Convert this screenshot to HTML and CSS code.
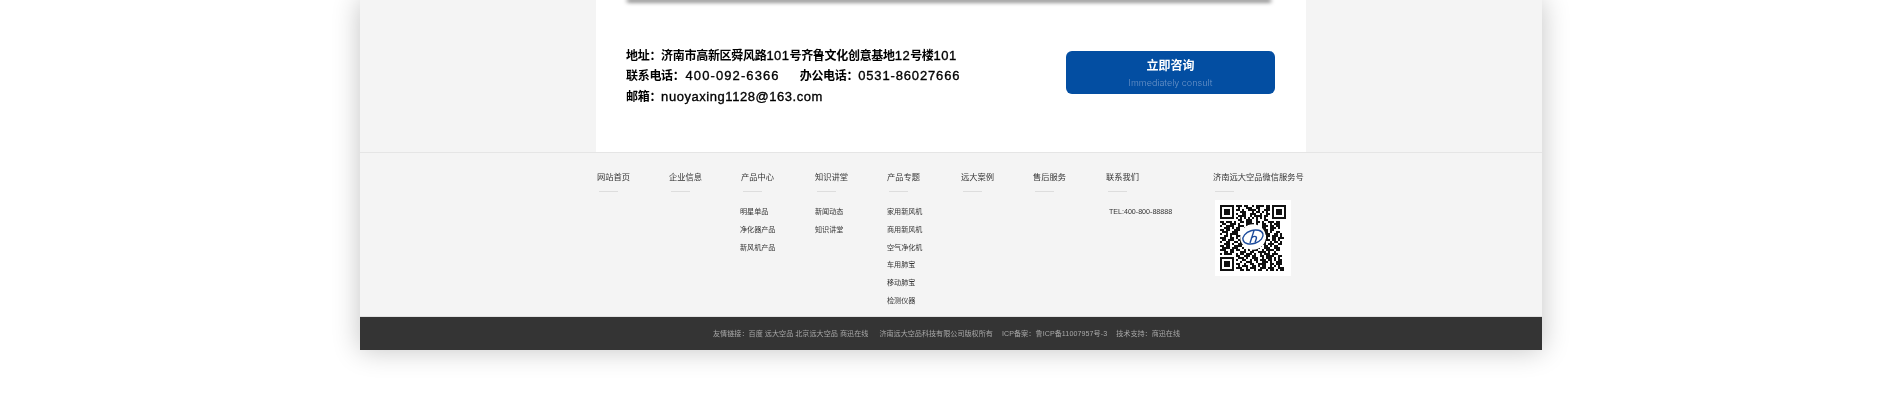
FILE: index.html
```html
<!DOCTYPE html>
<html lang="zh-CN">
<head>
<meta charset="utf-8">
<title>济南远大空品</title>
<link rel="stylesheet" href="styles.css">
</head>
<body>
<div class="frame">
  <div class="top">
    <section class="panel">
      <div class="shot-edge"></div>
      <div class="contact-row">
        <div class="contact">
          <p>地址&#xFF1A;济南市高新区舜风路<span class="la">101</span>号齐鲁文化创意基地<span class="la">12</span>号楼<span class="la">101</span></p>
          <p>联系电话&#xFF1A;<span class="la tel">400-092-6366</span><span class="office">办公电话&#xFF1A;</span><span class="la tel tel-office">0531-86027666</span></p>
          <p>邮箱&#xFF1A;<span class="la mail">nuoyaxing1128@163.com</span></p>
        </div>
        <a class="consult" href="#"><strong>立即咨询</strong><span>Immediately consult</span></a>
      </div>
    </section>
  </div>
  <nav class="sitemap">
    <div class="col"><h4>网站首页</h4></div>
    <div class="col"><h4>企业信息</h4></div>
    <div class="col"><h4>产品中心</h4><ul class="pull"><li>明星单品</li><li>净化器产品</li><li>新风机产品</li></ul></div>
    <div class="col"><h4>知识讲堂</h4><ul><li>新闻动态</li><li>知识讲堂</li></ul></div>
    <div class="col"><h4>产品专题</h4><ul><li>家用新风机</li><li>商用新风机</li><li>空气净化机</li><li>车用肺宝</li><li>移动肺宝</li><li>检测仪器</li></ul></div>
    <div class="col"><h4>远大案例</h4></div>
    <div class="col"><h4>售后服务</h4></div>
    <div class="col"><h4>联系我们</h4><ul class="push"><li>TEL:400-800-88888</li></ul></div>
    <div class="col"><h4>济南远大空品微信服务号</h4>
      <div class="qr">
        <svg viewBox="0 0 33 33" width="66" height="66" aria-label="二维码">
          <path fill="#111" fill-rule="evenodd" d="M0 0h7v7h-7zM1 1v5h5v-5zM2 2h3v3h-3zM26 0h7v7h-7zM27 1v5h5v-5zM28 2h3v3h-3zM0 26h7v7h-7zM1 27v5h5v-5zM2 28h3v3h-3z"/>
          <path fill="none" stroke="#111" stroke-width="1" d="M8 .5h3m1 0h2m2 0h1m1 0h4m1 0h2M9 1.5h1m3 0h3m2 0h2m3 0h2M8 2.5h2m1 0h1m2 0h4m1 0h1m2 0h3M10 3.5h3m3 0h1m1 0h2m1 0h1m1 0h1M8 4.5h1m2 0h2m2 0h3m2 0h1m2 0h2M9 5.5h4m2 0h1m1 0h4m1 0h2M8 6.5h1m1 0h1m1 0h1m1 0h1m1 0h1m1 0h1m1 0h1m1 0h1M9 7.5h2m2 0h3m2 0h1m3 0h2M0 8.5h2m1 0h3m1 0h1m2 0h2m1 0h3m2 0h2m1 0h1m2 0h3m1 0h2M1 9.5h2m2 0h3m1 0h1m3 0h4m1 0h1m2 0h2m2 0h1m1 0h3M0 10.5h1m2 0h4m2 0h3m1 0h1m2 0h3m2 0h3m1 0h2m1 0h2M2 11.5h3m1 0h1m1 0h2m2 0h4m3 0h1m1 0h2m2 0h3m1 0h1M0 12.5h2m1 0h2m2 0h3m2 0h1m1 0h2m1 0h2m2 0h3m1 0h2M1 13.5h3m2 0h3m2 0h1m10 0h2m1 0h1m2 0h2M0 14.5h1m2 0h1m1 0h4m2 0h1m10 0h3m2 0h2m1 0h1M2 15.5h2m1 0h1m2 0h3m12 0h2m1 0h3m1 0h1M0 16.5h3m2 0h2m1 0h1m1 0h1m12 0h1m2 0h2m1 0h3M1 17.5h2m1 0h3m2 0h2m11 0h3m1 0h2m1 0h1M0 18.5h1m2 0h2m2 0h2m1 0h2m10 0h1m2 0h1m1 0h2m1 0h1M2 19.5h3m1 0h1m2 0h3m9 0h2m1 0h3m2 0h2M0 20.5h2m1 0h2m2 0h4m2 0h2m1 0h2m2 0h1m1 0h2m1 0h1m1 0h2M1 21.5h4m1 0h3m2 0h1m2 0h3m1 0h2m2 0h3m2 0h3M0 22.5h3m2 0h2m1 0h2m2 0h1m1 0h1m1 0h3m2 0h1m1 0h4m1 0h2M2 23.5h2m1 0h2m3 0h3m2 0h2m2 0h4m1 0h1m2 0h1M0 24.5h1m1 0h4m2 0h1m1 0h2m1 0h3m1 0h1m2 0h1m1 0h3m1 0h3M8 25.5h2m2 0h3m1 0h2m2 0h2m1 0h4m2 0h2M9 26.5h3m1 0h1m2 0h3m2 0h1m1 0h3m1 0h1m1 0h1M8 27.5h1m2 0h2m2 0h1m1 0h2m1 0h3m1 0h2m1 0h1m1 0h2M10 28.5h1m2 0h3m2 0h1m2 0h3m1 0h1m2 0h3M8 29.5h2m2 0h1m2 0h2m2 0h4m2 0h2m1 0h3M9 30.5h1m1 0h3m2 0h2m1 0h1m1 0h2m2 0h1m1 0h1m1 0h1M8 31.5h3m2 0h1m1 0h3m2 0h3m1 0h3m2 0h3M10 32.5h2m1 0h2m2 0h1m1 0h2m2 0h1m1 0h2m1 0h1m1 0h2"/>
          <circle cx="16.5" cy="16" r="6.4" fill="#fff"/>
          <g fill="none" stroke="#1c4b9c">
            <ellipse cx="16.5" cy="16" rx="5.2" ry="3.3" transform="rotate(-18 16.5 16)" stroke-width=".7"/>
            <path d="M17 12.8 15 19M15.6 16.6c1-1.3 3-1.2 2.6.2l-.7 2" stroke-width=".7"/>
          </g>
        </svg>
      </div>
    </div>
  </nav>
  <footer class="legal">
    <span class="links">友情链接&#xFF1A;百度 远大空品 北京远大空品 商迅在线</span>
    <span class="owner">济南远大空品科技有限公司版权所有</span>
    <span class="icp">ICP备案&#xFF1A;鲁ICP备11007957号-3</span>
    <span class="support">技术支持&#xFF1A;商迅在线</span>
  </footer>
</div>
</body>
</html>
```
FILE: styles.css
```css
* { box-sizing: border-box; }
html, body { margin: 0; padding: 0; }
body {
  background: #fff;
  height: 400px;
  overflow: hidden;
  font-family: "Liberation Sans", "Noto Sans CJK SC", sans-serif;
}
.frame {
  width: 1182px;
  margin-left: 360px;
  background: #f4f4f4;
  box-shadow: 0 0 26px rgba(0, 0, 0, .24);
}
.top {
  height: 154px;
  padding-left: 236px;
  border-bottom: 1px solid #e5e5e5;
}
.panel {
  width: 710px;
  height: 153px;
  background: #fff;
}
.shot-edge {
  height: 1px;
  margin: -1px 36px 0 32px;
  box-shadow: 0 1px 4px 1px rgba(0, 0, 0, .65);
}
.contact-row {
  display: flex;
  justify-content: space-between;
  align-items: flex-start;
  padding: 46px 31px 0 30px;
}
.contact { filter: blur(.25px); }
.contact p {
  margin: 0;
  font-size: 12px;
  line-height: 20.4px;
  font-weight: 700;
  letter-spacing: -.3px;
  color: #000;
  white-space: nowrap;
}
.la {
  font-size: 13px;
  font-weight: 400;
  letter-spacing: .45px;
  -webkit-text-stroke: .35px #000;
}
.tel { letter-spacing: 1.1px; margin-left: 1px; }
.tel-office { letter-spacing: .85px; margin-left: 0; }
.mail { letter-spacing: .55px; }
.office { margin-left: 20px; }
.consult {
  display: flex;
  flex-direction: column;
  align-items: center;
  width: 209px;
  height: 43px;
  margin-top: 5px;
  padding-top: 8px;
  border-radius: 6px;
  background: #034ea2;
  text-decoration: none;
}
.consult strong {
  font-size: 12px;
  line-height: 15px;
  color: #fff;
  filter: blur(.2px);
}
.consult span {
  margin-top: 3px;
  font-size: 9px;
  line-height: 12px;
  font-family: "Inter", "Liberation Sans", sans-serif;
  font-weight: 300;
  color: #6d95c8;
  filter: blur(.2px);
}
.sitemap {
  display: grid;
  grid-template-columns: 72px 72px 74px 72px 74px 72px 73px 107px auto;
  height: 163px;
  padding: 19px 0 0 237px;
  filter: blur(.25px);
}
.col h4 {
  margin: 0;
  font-size: 8.25px;
  line-height: 12px;
  font-weight: 400;
  color: #333;
  white-space: nowrap;
}
.col h4::after {
  content: "";
  display: block;
  width: 19px;
  height: 1px;
  margin: 7px 0 0 1.5px;
  background: #ddd;
}
.col ul {
  margin: 12px 0 0;
  padding: 0;
  list-style: none;
}
.col ul.pull { margin-left: -1px; }
.col ul.push { margin-left: 3px; }
.col li {
  font-size: 7.1px;
  line-height: 17.8px;
  color: #333;
  white-space: nowrap;
}
.qr {
  width: 76px;
  height: 76px;
  margin: 8px 0 0 2px;
  padding: 5px;
  background: #fff;
}
.qr svg { display: block; }
.legal {
  display: flex;
  align-items: center;
  height: 34px;
  padding: 0 0 2px 353px;
  border-top: 1px solid #e2e2e2;
  background: #343434;
  background-clip: padding-box;
  font-size: 7.1px;
  color: #a8a8a8;
  white-space: nowrap;
}
.legal span { filter: blur(.2px); }
.links { letter-spacing: .02px; }
.owner { margin-left: 11px; }
.icp { margin-left: 9px; letter-spacing: .08px; }
.support { margin-left: 9px; }
```
